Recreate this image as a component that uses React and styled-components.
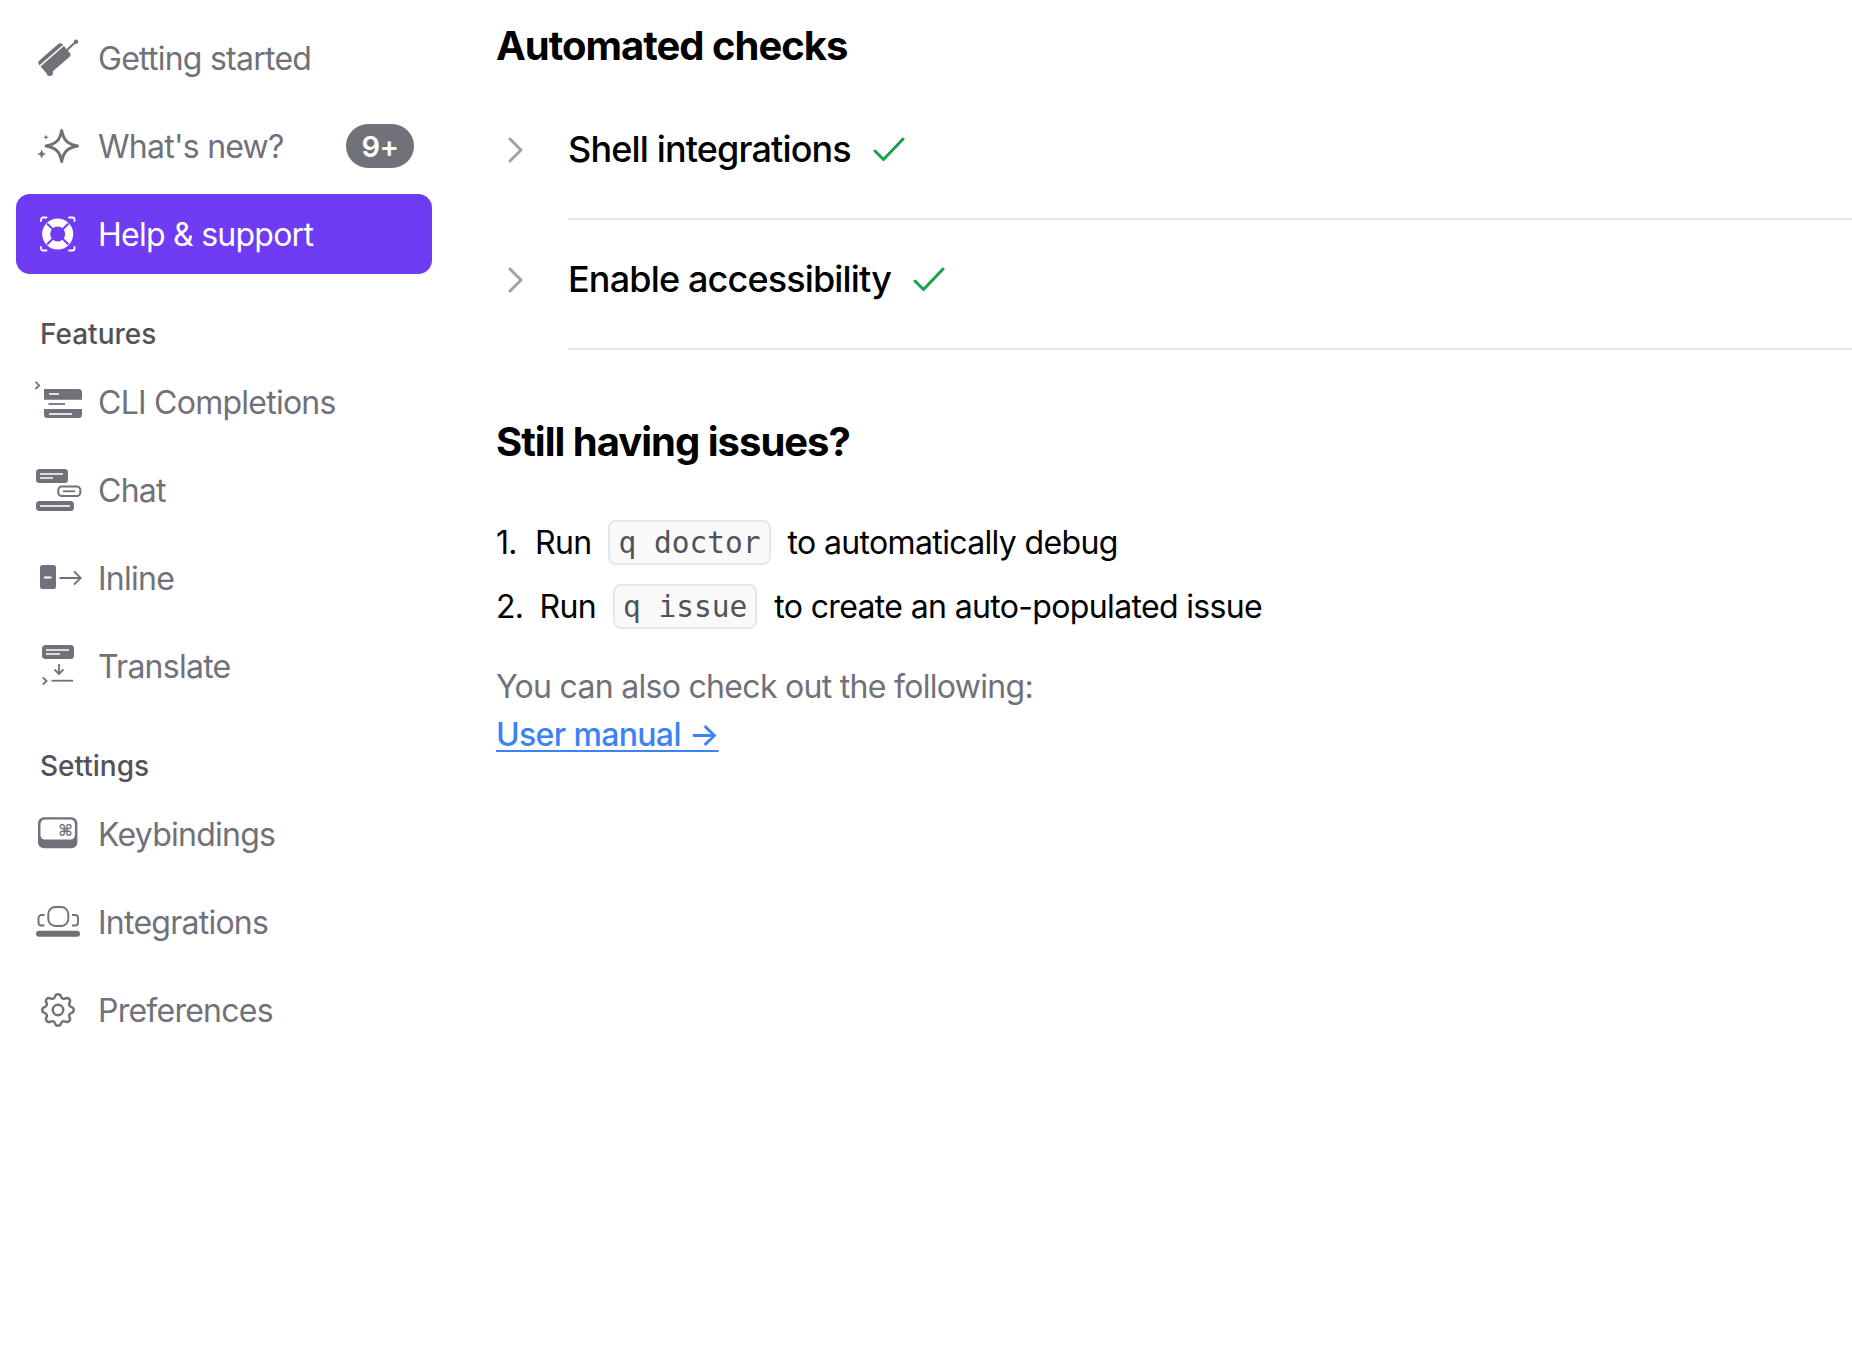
import React from "react";
import styled, { createGlobalStyle } from "styled-components";
import { HiOutlineCog } from "react-icons/hi";

const Global = createGlobalStyle`
  html, body { margin: 0; padding: 0; background: #fff; }
  body { font-family: Inter, "Liberation Sans", sans-serif; -webkit-font-smoothing: antialiased; }
`;

const Page = styled.div`
  display: flex;
  width: 1852px;
  height: 1352px;
  overflow: hidden;
`;
const Sidebar = styled.nav`
  width: 448px;
  flex: none;
  box-sizing: border-box;
  padding: 18px 16px 0;
`;
const NavList = styled.div`
  display: flex;
  flex-direction: column;
  gap: 8px;
`;
const Item = styled.div`
  display: flex;
  align-items: center;
  height: 80px;
  box-sizing: border-box;
  padding-left: 18px;
  padding-right: 18px;
  gap: 16px;
  border-radius: 14px;
  font-size: 32px;
  letter-spacing: -0.75px;
  color: ${(p) => (p.$active ? "#fff" : "#71717a")};
  background: ${(p) => (p.$active ? "#6f3bf3" : "transparent")};
`;
const IconSlot = styled.span`
  width: 48px;
  height: 48px;
  flex: none;
  display: flex;
  align-items: center;
  justify-content: center;
  svg { display: block; }
`;
const Label = styled.span`
  flex: 1;
`;
const Badge = styled.span`
  width: 68px;
  height: 44px;
  border-radius: 22px;
  background: #71717a;
  color: #fff;
  font-size: 29px;
  letter-spacing: -0.6px;
  font-weight: 600;
  display: flex;
  align-items: center;
  justify-content: center;
`;
const SectionTitle = styled.div`
  height: 58px;
  margin-top: 30px;
  padding: 2px 0 0 24px;
  box-sizing: border-box;
  display: flex;
  align-items: center;
  font-size: 28px;
  font-weight: 500;
  color: #52525b;
`;
const Main = styled.main`
  flex: 1;
  padding-left: 48px;
  color: #000;
`;
const Heading = styled.h2`
  margin: ${(p) => p.$top}px 0 0;
  font-size: 40px;
  line-height: 44px;
  font-weight: 700;
  letter-spacing: -1px;
`;
const Checks = styled.div`
  margin-top: 22px;
`;
const CheckRow = styled.div`
  display: flex;
  align-items: flex-start;
`;
const Chevron = styled.svg`
  width: 72px;
  height: 40px;
  margin-top: 40px;
  flex: none;
`;
const CheckBody = styled.div`
  flex: 1;
  height: 130px;
  box-sizing: border-box;
  padding-top: 39px;
  border-bottom: 2px solid #e4e4e7;
  display: flex;
  align-items: flex-start;
  gap: 22px;
  font-size: 36px;
  letter-spacing: -0.85px;
  line-height: 40px;
  font-weight: 500;
`;
const CheckMark = styled.svg`
  width: 32px;
  height: 26px;
  margin-top: 8px;
  flex: none;
`;
const Steps = styled.ol`
  list-style: none;
  margin: 54px 0 0;
  padding: 0;
  display: flex;
  flex-direction: column;
  gap: 16px;
`;
const Step = styled.li`
  display: flex;
  align-items: center;
  gap: 17px;
  height: 48px;
  font-size: 32px;
  letter-spacing: -0.65px;
`;
const Marker = styled.span`
  width: ${(p) => p.$width}px;
  flex: none;
  white-space: nowrap;
`;
const Code = styled.code`
  height: 45px;
  box-sizing: border-box;
  padding: 0 8px;
  border: 2px solid #e7e7e9;
  border-radius: 8px;
  background: #fafafa;
  color: #52525b;
  font-family: "DejaVu Sans Mono", "Liberation Mono", monospace;
  font-size: 29.5px;
  letter-spacing: 0;
  line-height: 43px;
`;
const Note = styled.p`
  margin: 33px 0 0;
  font-size: 32px;
  letter-spacing: -0.7px;
  line-height: 48px;
  color: #71717a;
`;
const ManualLink = styled.a`
  display: block;
  width: fit-content;
  color: #3b82f6;
  font-weight: 500;
  letter-spacing: -0.65px;
  text-decoration: underline;
  text-underline-offset: 4px;
  text-decoration-thickness: 2px;
`;

const G = "#71717a";

const Suitcase = () => (
  <svg width="48" height="48" viewBox="0 0 48 48">
    <g transform="rotate(-41 20 25)">
      <rect x="5" y="16.5" width="31" height="17" rx="3" fill={G} />
      <path d="M5 21H36" stroke="#fff" strokeWidth="1.5" />
    </g>
    <path d="M31 18 41 8.5" stroke={G} strokeWidth="2" />
    <circle cx="42" cy="7.7" r="2.2" fill={G} />
    <circle cx="15.8" cy="38.7" r="3.2" fill={G} />
  </svg>
);
const Sparkles = () => (
  <svg width="48" height="48" viewBox="0 0 48 48">
    <path d="M27.7 8.5C29.5 18 33 22 43.5 24 33 26 29.5 30 27.7 39.5 26 30 22.5 26 12 24 22.5 22 26 18 27.7 8.5Z" fill="none" stroke={G} strokeWidth="3" strokeLinejoin="round" />
    <path d="M7.7 27C8.3 30.3 9.4 31.4 12.7 32 9.4 32.6 8.3 33.7 7.7 37 7.1 33.7 6 32.6 2.7 32 6 31.4 7.1 30.3 7.7 27Z" fill={G} />
    <path d="M12 12.3C12.3 14.3 13 15 15 15.3 13 15.6 12.3 16.3 12 18.3 11.7 16.3 11 15.6 9 15.3 11 15 11.7 14.3 12 12.3Z" fill={G} />
  </svg>
);
const Buoy = () => (
  <svg width="48" height="48" viewBox="0 0 48 48">
    <circle cx="23.7" cy="24" r="11.5" fill="none" stroke="#fff" strokeWidth="8" />
    <path d="M13 13.5 19 19.5M34.5 13.5 28.5 19.5M13 34.5 19 28.5M34.5 34.5 28.5 28.5" stroke="#6f3bf3" strokeWidth="2" />
    <path d="M7 11V9.5A2 2 0 0 1 9 7.5H12.5M35 7.5H38.5A2 2 0 0 1 40.5 9.5V11M40.5 37V38.5A2 2 0 0 1 38.5 40.5H35M12.5 40.5H9A2 2 0 0 1 7 38.5V37" fill="none" stroke="#fff" strokeWidth="1.8" strokeLinecap="round" />
  </svg>
);
const Cli = () => (
  <svg width="48" height="48" viewBox="0 0 48 48">
    <path d="M1.5 3.8 5.2 7.4 1.5 11" fill="none" stroke={G} strokeWidth="1.8" />
    <path d="M10 11H44.5A3.5 3.5 0 0 1 48 14.5V21.7H10Z" fill={G} />
    <path d="M15 16H25" stroke="#fff" strokeWidth="1.6" />
    <path d="M14.5 26H31" stroke={G} strokeWidth="1.8" />
    <path d="M10 31H48V36.5A3.5 3.5 0 0 1 44.5 40H13.5A3.5 3.5 0 0 1 10 36.5Z" fill={G} />
    <path d="M15 36H38" stroke="#fff" strokeWidth="1.6" />
  </svg>
);
const Chat = () => (
  <svg width="48" height="48" viewBox="0 0 48 48">
    <rect x="2" y="3" width="32" height="14" rx="3.5" fill={G} />
    <path d="M6 8H29M6 12H19" stroke="#fff" strokeWidth="1.5" />
    <rect x="24.3" y="20.5" width="22" height="9.5" rx="3.5" fill="none" stroke={G} strokeWidth="2" />
    <path d="M29 25.3H41" stroke={G} strokeWidth="1.8" />
    <rect x="2" y="35" width="38" height="10" rx="3.5" fill={G} />
    <path d="M6 40H36" stroke="#fff" strokeWidth="1.6" />
  </svg>
);
const Inline = () => (
  <svg width="48" height="48" viewBox="0 0 48 48">
    <rect x="6" y="11" width="16" height="24" rx="2.5" fill={G} />
    <path d="M10 23.5H17.5" stroke="#fff" strokeWidth="2" />
    <path d="M25.5 24H47M40 17.5 46.8 24 40 30.5" fill="none" stroke={G} strokeWidth="1.8" />
  </svg>
);
const Translate = () => (
  <svg width="48" height="48" viewBox="0 0 48 48">
    <rect x="8" y="3" width="32" height="14" rx="3.5" fill={G} />
    <path d="M12 8H35M12 12H26" stroke="#fff" strokeWidth="1.5" />
    <path d="M25 22V32M20.5 27.5 25 32 29.5 27.5" fill="none" stroke={G} strokeWidth="1.8" />
    <path d="M17.5 38.7H39" stroke={G} strokeWidth="1.8" />
    <path d="M8.8 35.5 12.6 39 8.8 42.5" fill="none" stroke={G} strokeWidth="1.8" />
  </svg>
);
const Keys = () => (
  <svg width="48" height="48" viewBox="0 0 48 48">
    <rect x="4" y="7.3" width="39.4" height="31" rx="6" fill={G} />
    <rect x="6.5" y="9.5" width="34.4" height="20" rx="4.5" fill="#fff" />
    <text x="31" y="25.5" textAnchor="middle" fontFamily="DejaVu Sans" fontWeight="700" fontSize="16" fill={G}>⌘</text>
  </svg>
);
const Plugs = () => (
  <svg width="48" height="48" viewBox="0 0 48 48">
    <rect x="14.3" y="9" width="20" height="19" rx="7" fill="none" stroke={G} strokeWidth="1.9" />
    <path d="M10.5 17H7.5A3 3 0 0 0 4.5 20V24.5A3 3 0 0 0 7.5 27.5H10.5M38 17H41A3 3 0 0 1 44 20V24.5A3 3 0 0 1 41 27.5H38" fill="none" stroke={G} strokeWidth="1.9" />
    <rect x="2" y="32.7" width="44" height="6" rx="3" fill={G} />
  </svg>
);

const NavItem = ({ icon, label, active, badge }) => (
  <Item $active={active}>
    <IconSlot>{icon}</IconSlot>
    <Label>{label}</Label>
    {badge && <Badge>{badge}</Badge>}
  </Item>
);

const CheckItem = ({ label }) => (
  <CheckRow>
    <Chevron viewBox="0 0 72 40">
      <path d="M14 9 25 20 14 31" fill="none" stroke="#a1a1aa" strokeWidth="3" strokeLinecap="round" strokeLinejoin="round" />
    </Chevron>
    <CheckBody>
      <span>{label}</span>
      <CheckMark viewBox="0 0 32 26">
        <path d="M2 14 10.5 22.5 30 2" fill="none" stroke="#16a34a" strokeWidth="3" strokeLinecap="round" strokeLinejoin="round" />
      </CheckMark>
    </CheckBody>
  </CheckRow>
);

export default function App() {
  return (
    <Page>
      <Global />
      <Sidebar>
        <NavList>
          <NavItem icon={<Suitcase />} label="Getting started" />
          <NavItem icon={<Sparkles />} label="What's new?" badge="9+" />
          <NavItem icon={<Buoy />} label="Help & support" active />
        </NavList>
        <SectionTitle>Features</SectionTitle>
        <NavList>
          <NavItem icon={<Cli />} label="CLI Completions" />
          <NavItem icon={<Chat />} label="Chat" />
          <NavItem icon={<Inline />} label="Inline" />
          <NavItem icon={<Translate />} label="Translate" />
        </NavList>
        <SectionTitle>Settings</SectionTitle>
        <NavList>
          <NavItem icon={<Keys />} label="Keybindings" />
          <NavItem icon={<Plugs />} label="Integrations" />
          <NavItem icon={<HiOutlineCog size={42} color={G} style={{ strokeWidth: 1.4 }} />} label="Preferences" />
        </NavList>
      </Sidebar>
      <Main>
        <Heading $top={24}>Automated checks</Heading>
        <Checks>
          <CheckItem label="Shell integrations" />
          <CheckItem label="Enable accessibility" />
        </Checks>
        <Heading $top={70}>Still having issues?</Heading>
        <Steps>
          <Step>
            <Marker $width={22}>1.</Marker>
            <span>Run</span>
            <Code>q doctor</Code>
            <span>to automatically debug</span>
          </Step>
          <Step>
            <Marker $width={26.5}>2.</Marker>
            <span>Run</span>
            <Code>q issue</Code>
            <span>to create an auto-populated issue</span>
          </Step>
        </Steps>
        <Note>
          You can also check out the following:
          <ManualLink>User manual →</ManualLink>
        </Note>
      </Main>
    </Page>
  );
}
